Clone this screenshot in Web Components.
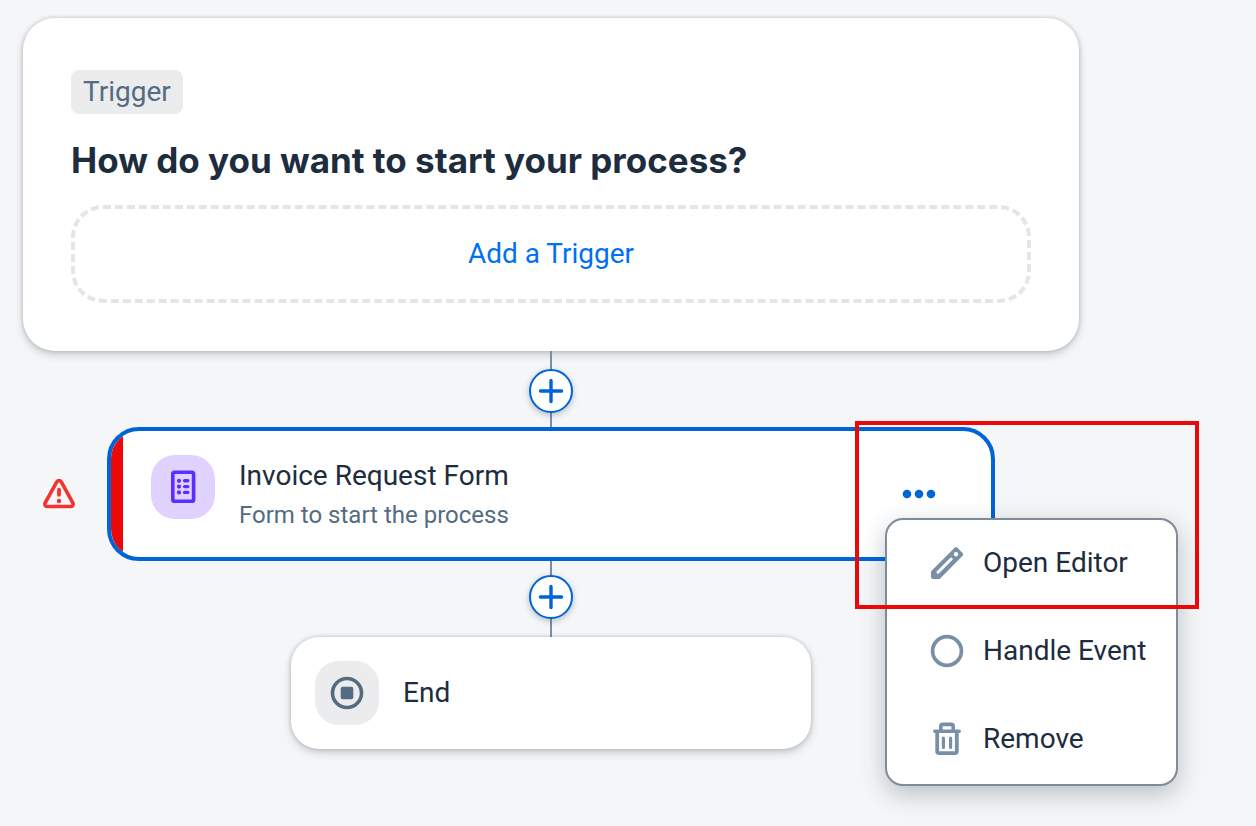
<!DOCTYPE html>
<html lang="en">
<head>
<meta charset="utf-8">
<title>Process Builder</title>
<style>
  body {
    margin: 0;
    min-height: 100vh;
    overflow-x: hidden;
    background: #f5f6f7;
    color: #1d2d3e;
    font: 28px/40px Roboto, "Noto Sans", sans-serif;
    --blue: #0064d9;
    --slate: #556b82;
    --slate-light: #788fa6;
    --red: #ea0808;
    --card-shadow: 0 0 4px rgba(34, 53, 72, .24), 0 4px 8px rgba(34, 53, 72, .2);
  }
</style>
</head>
<body>
<process-canvas>
  <trigger-card label="Trigger" action="Add a Trigger">How do you want to start your process?</trigger-card>
  <flow-connector></flow-connector>
  <form-step>
    <span slot="title">Invoice Request Form</span>
    <span slot="subtitle">Form to start the process</span>
    <context-menu slot="menu">
      <menu-action icon="edit">Open Editor</menu-action>
      <menu-action icon="circle">Handle Event</menu-action>
      <menu-action icon="delete">Remove</menu-action>
    </context-menu>
    <highlight-frame slot="menu"></highlight-frame>
  </form-step>
  <flow-connector toward="start"></flow-connector>
  <end-step>End</end-step>
</process-canvas>

<script>
const icons = {
  edit: `<path fill="currentColor" d="M23.600 .700a2 2 0 0 1 2.800 0l5.200 5.200a2 2 0 0 1 0 2.800L9.200 31.400a2 2 0 0 1-1.400.600H2a2 2 0 0 1-2-2v-4.800a2 2 0 0 1 .600-1.400Z"/><path stroke="#fff" stroke-width="3" stroke-linecap="round" d="M7 25.200L20.200 12"/><circle cx="25" cy="7.200" r="2.200" fill="#fff"/>`,
  circle: `<circle cx="16" cy="16" r="14.400" fill="none" stroke="currentColor" stroke-width="3.700"/>`,
  delete: `<g fill="none" stroke="currentColor" stroke-linecap="round"><path stroke-width="3.600" d="M3.800 8.200h24.400M9.800 7.500V3.400a2 2 0 0 1 2-2h8.400a2 2 0 0 1 2 2V7.500"/><path stroke-width="3.800" d="M6.200 9v19.300a1.900 1.900 0 0 0 1.900 1.900h15.800a1.900 1.900 0 0 0 1.900-1.900V9"/><path stroke-width="3.200" d="M12.400 15.200v9.200M19.600 15.200v9.200"/></g>`
};

function define(name, html, setup) {
  customElements.define(name, class extends HTMLElement {
    connectedCallback() {
      if (this.shadowRoot) return;
      const template = document.createElement('template');
      template.innerHTML = html;
      this.attachShadow({ mode: 'open' }).append(template.content.cloneNode(true));
      if (setup) setup(this, this.shadowRoot);
    }
  });
}

const base = `*{box-sizing:border-box}button{font:inherit;color:inherit;margin:0;padding:0;border:0;background:none;cursor:pointer}svg{display:block;overflow:visible}`;

define('process-canvas', `
<style>
  ${base}
  :host { display: block; box-sizing: border-box; padding: 18px 177px 76px 23px; }
  main { display: flex; flex-direction: column; align-items: center; }
</style>
<main><slot></slot></main>`);

define('trigger-card', `
<style>
  ${base}
  :host { display: block; box-sizing: border-box; width: 100%; padding: 52px 48px 48px; background: #fff; border-radius: 32px; box-shadow: var(--card-shadow); }
  .tag { display: inline-block; vertical-align: top; padding: 2px 12px; border-radius: 8px; background: #eaecee; color: var(--slate); }
  h1 { margin: 24px 0 23px; font: 700 35px/44px Inter, Roboto, sans-serif; }
  .add { display: block; width: 100%; height: 98px; border: 4px dashed #e5e5e5; border-radius: 32px; color: #0070f2; }
</style>
<span class="tag"></span>
<h1><slot></slot></h1>
<button class="add" type="button"></button>`, (host, root) => {
  root.querySelector('.tag').textContent = host.getAttribute('label');
  root.querySelector('.add').textContent = host.getAttribute('action');
});

define('flow-connector', `
<style>
  ${base}
  :host { display: block; padding: 18px 0 14px; background: linear-gradient(var(--slate-light), var(--slate-light)) center / 2px 100% no-repeat; }
  :host([toward="start"]) { padding: 14px 0 18px; }
  button { display: grid; place-items: center; width: 44px; height: 44px; border: 2px solid var(--blue); border-radius: 50%; background: #fff; color: var(--blue); box-shadow: 0 2px 6px rgba(34, 53, 72, .3); }
</style>
<button type="button" aria-label="Add step">
  <svg width="24" height="24" viewBox="0 0 24 24" fill="none" stroke="currentColor" stroke-width="3.400" stroke-linecap="round"><path d="M12 1.400v21.200M1.400 12h21.200"/></svg>
</button>`);

define('form-step', `
<style>
  ${base}
  :host { display: block; position: relative; width: 100%; max-width: 888px; }
  .warning { position: absolute; right: 100%; top: 50%; margin: -16px 32px 0 0; color: #f53232; }
  .node { position: relative; display: flex; gap: 24px; padding: 24px 56px 24px 40px; border: 4px solid var(--blue); border-radius: 32px; background: linear-gradient(90deg, var(--red) 12px, #fff 12px); background-origin: padding-box; background-clip: padding-box; }
  .icon { flex: none; display: grid; place-items: center; width: 64px; height: 64px; border-radius: 24px; background: #dfd2ff; color: #5b2dff; }
  .text { flex: 1; min-width: 0; }
  .title { line-height: 42px; }
  p { margin: 0; font-size: 24px; line-height: 36px; color: var(--slate); }
  .more { align-self: center; color: var(--blue); }
</style>
<div class="warning" role="img" aria-label="Error">
  <svg width="32" height="32" viewBox="0 0 32 32"><path d="M13.800 3.900a2.600 2.600 0 0 1 4.500 0l11.700 21.200a2.300 2.300 0 0 1-2 3.400H4a2.300 2.300 0 0 1-2-3.400Z" fill="none" stroke="#fff" stroke-opacity=".7" stroke-width="7"/><path d="M13.800 3.900a2.600 2.600 0 0 1 4.500 0l11.700 21.200a2.300 2.300 0 0 1-2 3.400H4a2.300 2.300 0 0 1-2-3.400Z" fill="#fdf5f5" stroke="currentColor" stroke-width="3.600"/><path d="M16 11.600v5.200" stroke="currentColor" stroke-width="3.800" stroke-linecap="round"/><circle cx="16" cy="23" r="2.200" fill="currentColor"/></svg>
</div>
<section class="node">
  <div class="icon">
    <svg width="32" height="32" viewBox="0 0 32 32" fill="none" stroke="currentColor"><rect x="5.800" y="1.200" width="20.800" height="29" rx="1.800" stroke-width="3.600"/><path d="M12 9.800h.010M12 15.600h.010M12 21.400h.010" stroke-width="4.200" stroke-linecap="round"/><path d="M17.600 9.800h3.200M17.600 15.600h3.200M17.600 21.400h3.200" stroke-width="3.400" stroke-linecap="round"/></svg>
  </div>
  <div class="text">
    <div class="title"><slot name="title"></slot></div>
    <p><slot name="subtitle"></slot></p>
  </div>
  <button class="more" type="button" aria-label="More options">
    <svg width="32" height="32" viewBox="0 0 32 32" fill="currentColor"><circle cx="4" cy="16" r="4.300"/><circle cx="16" cy="16" r="4.300"/><circle cx="28" cy="16" r="4.300"/></svg>
  </button>
</section>
<slot name="menu"></slot>`);

define('context-menu', `
<style>
  ${base}
  :host { display: block; box-sizing: border-box; position: absolute; z-index: 1; top: 91px; right: -183px; width: 293px; border: 2px solid #808b98; border-radius: 18px; background: #fff; box-shadow: 0 8px 24px rgba(34, 53, 72, .28); }
</style>
<div role="menu"><slot></slot></div>`);

define('menu-action', `
<style>
  ${base}
  :host { display: block; }
  button { display: flex; align-items: center; gap: 20px; width: 100%; height: 88px; padding: 0 0 2px 44px; text-align: left; white-space: nowrap; }
  svg { flex: none; color: var(--slate-light); }
</style>
<button type="button" role="menuitem"><svg width="32" height="32" viewBox="0 0 32 32" aria-hidden="true"></svg><span><slot></slot></span></button>`, (host, root) => {
  root.querySelector('svg').innerHTML = icons[host.getAttribute('icon')];
});

define('highlight-frame', `
<style>
  :host { display: block; box-sizing: border-box; position: absolute; z-index: 2; top: -6px; right: -204px; width: 344px; height: 188px; border: 4px solid var(--red); pointer-events: none; }
</style>`);

define('end-step', `
<style>
  ${base}
  :host { display: flex; align-items: center; gap: 24px; box-sizing: border-box; width: 100%; max-width: 520px; padding: 24px; border-radius: 28px; background: #fff; box-shadow: var(--card-shadow); }
  .icon { display: grid; place-items: center; width: 64px; height: 64px; border-radius: 24px; background: #eaecee; color: var(--slate); }
</style>
<div class="icon">
  <svg width="32" height="32" viewBox="0 0 32 32"><circle cx="16" cy="16" r="14.500" fill="none" stroke="currentColor" stroke-width="3.600"/><rect x="9.700" y="9.700" width="12.600" height="12.600" rx="2" fill="currentColor"/></svg>
</div>
<span><slot></slot></span>`);
</script>
</body>
</html>
